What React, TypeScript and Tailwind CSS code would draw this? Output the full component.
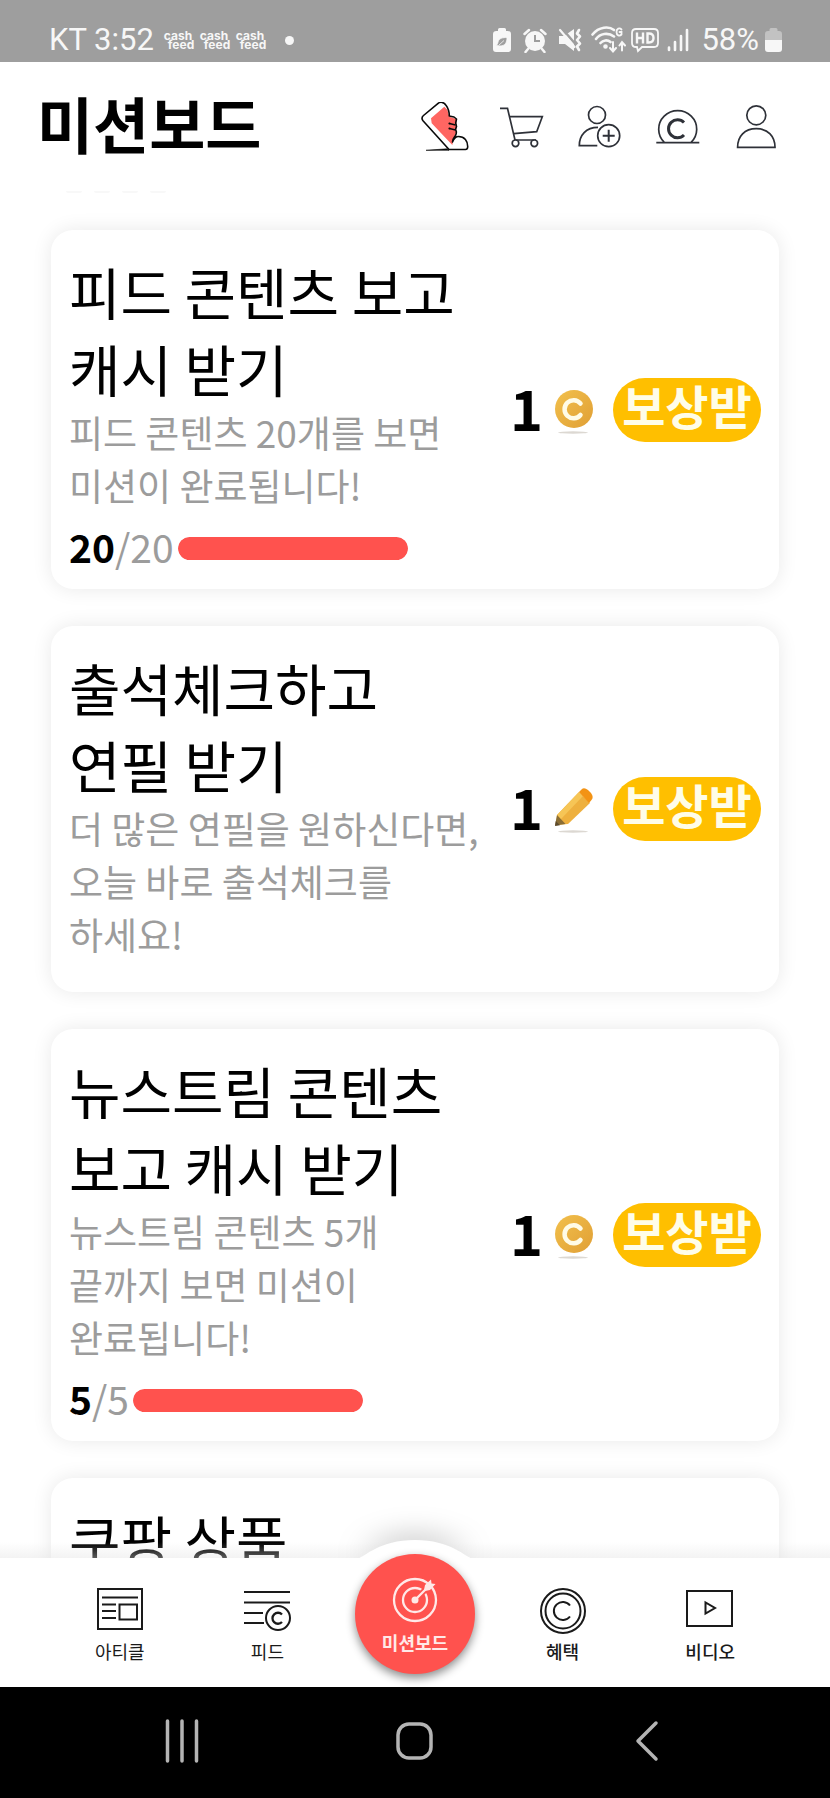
import type { ReactNode } from "react";

type Mission = {
  title: string;
  description: string;
  reward: "cash" | "pencil";
  done?: number;
  total?: number;
};

const missions: Mission[] = [
  {
    title: "피드 콘텐츠 보고\n캐시 받기",
    description: "피드 콘텐츠 20개를 보면\n미션이 완료됩니다!",
    reward: "cash",
    done: 20,
    total: 20,
  },
  {
    title: "출석체크하고\n연필 받기",
    description: "더 많은 연필을 원하신다면,\n오늘 바로 출석체크를\n하세요!",
    reward: "pencil",
  },
  {
    title: "뉴스트림 콘텐츠\n보고 캐시 받기",
    description: "뉴스트림 콘텐츠 5개\n끝까지 보면 미션이\n완료됩니다!",
    reward: "cash",
    done: 5,
    total: 5,
  },
];

function StatusBar() {
  return (
    <div className="flex h-[62px] shrink-0 items-center bg-[#9e9e9e] pl-[49px] pr-12 pt-[18px] font-['Roboto',sans-serif] text-[31px] leading-8 text-[#f7f7f7]">
      <span>KT 3:52</span>
      <div className="ml-[10px] flex gap-[5px]">
        {[0, 1, 2].map((i) => (
          <div key={i} className="w-[31px] font-['Inter',sans-serif] text-[12px] font-bold leading-[9px]">
            <div>cash</div>
            <div className="pl-1">feed</div>
          </div>
        ))}
      </div>
      <span className="ml-[18px] size-[9px] rounded-full bg-[#f7f7f7]" />

      <div className="ml-auto flex items-center">
        <svg width="18" height="26" viewBox="0 0 18 26" className="mr-3">
          <path d="M5 4V2.500Q5 1 6.500 1h5Q13 1 13 2.500V4h1.500Q18 4 18 7v15q0 3-3 3H3q-3 0-3-3V7q0-3 3.500-3z" fill="#f7f7f7" />
          <path d="M3 19c1-1.500 2-2.500 2-4 1-4 5-4.500 9-4.500 0 5-2 8.500-7 8.500-1 0-1.500-.5-2-.5zM6 18l5-4.500" fill="#9e9e9e" stroke="#f7f7f7" strokeWidth=".8" />
        </svg>
        <svg width="24" height="26" viewBox="0 0 24 26" className="mr-[11px]">
          <circle cx="12" cy="14" r="10" fill="#f7f7f7" />
          <path d="M1.500 7 6 3M22.500 7 18 3M5 22l-2.500 3M19 22l2.500 3" stroke="#f7f7f7" strokeWidth="2.500" strokeLinecap="round" />
          <path d="M12 8v6h5" fill="none" stroke="#9e9e9e" strokeWidth="2" />
        </svg>
        <svg width="24" height="26" viewBox="0 0 24 26" className="mr-[9px]">
          <path d="M1 9h5l10-7v22l-9-7H1z" fill="#f7f7f7" />
          <path d="M3.500 1 20 20" stroke="#9e9e9e" strokeWidth="2.500" />
          <path d="m2 3 14.500 17" stroke="#f7f7f7" strokeWidth="2.200" strokeLinecap="round" />
          <path d="m21 3-2 3.500 3 3-3 3.500 3 3.500-3 3 2 3.500" fill="none" stroke="#f7f7f7" strokeWidth="2.600" strokeLinecap="round" strokeLinejoin="round" />
        </svg>
        <svg width="35" height="28" viewBox="0 0 35 28" className="mr-[5px]" fill="none" stroke="#f7f7f7" strokeWidth="2.600" strokeLinecap="round">
          <path d="M1.500 8.500C8 .5 18 0 23 4M5 13c4-5.500 12-7 18-2.500M9.500 17c2.500-3 7-3.500 10-1" />
          <circle cx="14.500" cy="20.500" r="1" fill="#f7f7f7" />
          <path d="M30.500 3.500c-2-2-5-1-5 2.500s3 4.500 5 2.500V6h-2" strokeWidth="1.800" />
          <path d="M22 16v9m-3-3 3 3.500 3-3.500M31 24.500v-8m-2.500 3L31 16l3 3.500" strokeWidth="2" />
        </svg>
        <svg width="28" height="26" viewBox="0 0 28 26" className="mr-[8px]" fill="none" stroke="#f7f7f7" strokeWidth="1.800">
          <path d="M5 2h18q4 0 4 4v10q0 4-4 4H11l-4 4-1-4H5q-4 0-4-4V6q0-4 4-4z" />
          <path d="M6 5.500v11M12 5.500v11M6 11h6M16.500 6.500v9H18q4.500 0 4.500-4.500T18 6.500z" strokeWidth="2.400" />
        </svg>
        <svg width="22" height="26" viewBox="0 0 22 26" className="mr-[12px]" stroke="#f7f7f7" strokeWidth="2.600" strokeLinecap="round">
          <path d="M2 20.500V23M8 15v8M14 9v14M20 3v20" />
        </svg>
        <span className="mr-[6px]">58%</span>
        <svg width="17" height="26" viewBox="0 0 17 26">
          <path d="M4.500 4V2.500q0-1.500 1.500-1.500h5q1.500 0 1.500 1.500V4H14q3 0 3 3v6H0V7q0-3 3-3z" fill="#c2c2c2" />
          <path d="M0 13h17v9q0 3-3 3H3q-3 0-3-3z" fill="#f7f7f7" />
        </svg>
      </div>
    </div>
  );
}

function HeaderButton({ label, children }: { label: string; children: ReactNode }) {
  return (
    <button type="button" aria-label={label} className="size-[50px]">
      <svg viewBox="0 0 50 50" className="size-full" fill="none" stroke="#2e3138" strokeWidth="1.700">
        {children}
      </svg>
    </button>
  );
}

function Header() {
  return (
    <header className="flex h-[129px] shrink-0 items-center justify-between bg-white pl-[37px] pr-12">
      <h1 className="pb-[7px] text-[61px] font-bold leading-[88px]">미션보드</h1>
      <div className="flex gap-7">
        <HeaderButton label="만보기">
          <path d="M24.300 4.700 11 16.300l.7 5L32.300 43l1.200-5.500L34 35.700l2.300-6V17l-7-2.300-2-7z" fill="#ff6662" stroke="none" />
          <path
            d="M17.500 1.800 3.500 13.500Q.8 15.800 3 18.700L29 47.500h16.500q2 0 2.200-2.500c.2-6-3.200-10.500-9.200-10.500-2.500 0-4.500 2-6 5.500 0-3 1.500-4.500 3-6.500.8-1.500 1-2.500.8-4l-.8-2 1-3-.8-3.500.8-4-2.500-2-4.700-1c0-4-1.300-8-3.300-10.700-2.300-3.300-5.500-4-8.500-1.500z"
            stroke="#0a0a0a"
            strokeWidth="1.600"
            strokeLinejoin="round"
          />
          <path d="m29.500 21.500 6 1.500M29.500 26.500l6 1.500" stroke="#0a0a0a" strokeWidth="1.400" />
          <circle cx="29.500" cy="21.500" r="1.100" fill="#0a0a0a" stroke="none" />
          <circle cx="29.500" cy="26.500" r="1.100" fill="#0a0a0a" stroke="none" />
          <path d="m6 48.300 21-1.500 2 1.500z" fill="#0a0a0a" stroke="#0a0a0a" strokeWidth=".6" />
        </HeaderButton>
        <HeaderButton label="장바구니">
          <path d="M2 6.300h7.500L17 38h21" />
          <path d="M12 14.700h32.300l-5.600 15-23 2" />
          <circle cx="17.500" cy="41.300" r="3.300" fill="#fff" />
          <circle cx="36.300" cy="41.300" r="3.300" fill="#fff" />
        </HeaderButton>
        <HeaderButton label="친구 초대">
          <circle cx="21" cy="13" r="8.500" />
          <path d="M22 25.400C10 25.400 3.300 33 3.300 43.700h18" />
          <circle cx="32.700" cy="33.700" r="11" />
          <path d="M32.700 27.700v12M26.700 33.700h12" strokeWidth="2" />
        </HeaderButton>
        <HeaderButton label="캐시">
          <path d="M10.500 40.500a19 18.500 0 1 1 26.400 0M2.300 40.700h43" />
          <path d="M30 20.500a9 9 0 1 0 0 12.500" strokeWidth="3" />
        </HeaderButton>
        <HeaderButton label="내 정보">
          <circle cx="24.300" cy="13.300" r="9.500" />
          <path d="M5.600 45.300c0-11 7-18.600 18.700-18.600S43 34.300 43 45.300z" />
        </HeaderButton>
      </div>
    </header>
  );
}

function CashIcon() {
  return (
    <svg width="40" height="48" viewBox="0 0 40 48">
      <defs>
        <linearGradient id="coin" x1="0" y1="0" x2="1" y2="1">
          <stop offset="0" stopColor="#f2c04c" />
          <stop offset="1" stopColor="#e09f35" />
        </linearGradient>
      </defs>
      <circle cx="19" cy="23" r="19" fill="url(#coin)" />
      <path d="M25.500 17.500a9 9 0 1 0 0 11.500" fill="none" stroke="#fffbe6" strokeWidth="4.500" strokeLinecap="round" />
      <ellipse cx="18" cy="46.500" rx="15" ry="1.200" fill="#dcd8d2" />
    </svg>
  );
}

function PencilIcon() {
  return (
    <svg width="40" height="48" viewBox="0 0 40 48">
      <path d="M2 30 24 7l11 11-22 21-12 1z" fill="#eeb03e" />
      <path d="M2 30 24 7l4 4L6 34z" fill="#f6c556" />
      <path d="m24 7 2.500-2.500Q29 2 33 5l3 3q3 4 .5 7L34 18z" fill="#f39314" />
      <path d="M2 30 0 40.500 10.500 39z" fill="#8a6d35" />
      <path d="m.8 36-.8 5 5-.8z" fill="#5d4b2c" />
      <ellipse cx="18" cy="46.500" rx="15" ry="1.200" fill="#dcd8d2" />
    </svg>
  );
}

function MissionCard({ mission }: { mission: Mission }) {
  const hasProgress = mission.done !== undefined && mission.total !== undefined;

  return (
    <li
      className={`flex items-center justify-between rounded-[22px] bg-white px-[18px] pt-[22px] shadow-[0_0_20px_rgba(0,0,0,0.09)] ${
        hasProgress ? "pb-[14px]" : "pb-[31px]"
      }`}
    >
      <div>
        <h2 className="whitespace-pre-line text-[56px] leading-[77px]">{mission.title}</h2>
        <p className="whitespace-pre-line text-[37px] leading-[53px] text-[#9c9c9c]">{mission.description}</p>
        {hasProgress && (
          <div className="mt-[10px] flex items-center gap-1">
            <span className="pb-1 text-[39px] leading-[49px] text-[#9c9c9c]">
              <b className="text-black">{mission.done}</b>/{mission.total}
            </span>
            <div className="h-[23px] w-[230px] overflow-hidden rounded-full bg-gray-100">
              <div
                className="h-full rounded-full bg-[#ff524e]"
                style={{ width: `${(mission.done! / mission.total!) * 100}%` }}
              />
            </div>
          </div>
        )}
      </div>

      {/* Offsets the uneven card padding, so the reward stays in the middle */}
      <div className={`flex shrink-0 items-center ${hasProgress ? "-mt-2" : "mt-[9px]"}`}>
        <span className="mr-3 pb-[6px] text-[56px] font-bold leading-[64px]">1</span>
        {mission.reward === "cash" ? <CashIcon /> : <PencilIcon />}
        <button
          type="button"
          className="ml-[18px] h-16 w-[148px] rounded-full bg-[#ffbf00] pb-[10px] text-[47px] font-bold leading-[54px] text-[#fffde8]"
        >
          보상받
        </button>
      </div>
    </li>
  );
}

function NavItem({ label, strong, children }: { label: string; strong?: boolean; children: ReactNode }) {
  return (
    <a href="#" className="flex flex-1 flex-col items-center pt-7 text-[#1a1a1a]">
      <svg width="48" height="48" viewBox="0 0 48 48" fill="none" stroke="#1a1a1a" strokeWidth="2">
        {children}
      </svg>
      <span className={`mt-[5px] text-[18px] leading-6 ${strong ? "font-medium" : ""}`}>{label}</span>
    </a>
  );
}

function BottomNav() {
  return (
    <nav className="relative flex h-[129px] shrink-0 bg-white px-[46px]">
      <div className="absolute inset-x-0 bottom-full h-4 bg-linear-to-b from-transparent to-[rgba(225,225,225,0.4)]" />
      {/* Raised edge around the active tab */}
      <svg
        width="116"
        height="19"
        viewBox="0 0 116 19"
        className="absolute -top-[18px] left-1/2 -translate-x-1/2 overflow-visible drop-shadow-[0_-4px_14px_rgba(0,0,0,0.25)]"
      >
        <path d="M0 19C8 17 22 0 58 0s50 17 58 19z" fill="#fff" />
      </svg>
      <div className="absolute inset-0 bg-white" />

      <div className="relative flex flex-1">
        <NavItem label="아티클">
          <path d="M2 3h44v40H2zM6 11.500h36M6 18.500h14M6 25h14M6 32h14M23.500 18.500h17.500v15H23.500z" />
        </NavItem>
        <NavItem label="피드">
          <path d="M1 6h46M1 16.500h46M1 27h19M1 37h20" />
          <circle cx="35" cy="32" r="12" />
          <path d="M39 28.500a5.500 5.500 0 1 0 0 7.500" strokeWidth="2.300" />
        </NavItem>

        <div className="flex flex-1 justify-center">
          <a
            href="#"
            aria-current="page"
            className="-mt-1 flex size-[120px] shrink-0 flex-col items-center rounded-full bg-[#ff524e] pt-[21px] text-[#ffe9e8] shadow-[0_4px_10px_rgba(0,0,0,0.45)]"
          >
            <svg width="50" height="50" viewBox="0 0 50 50" fill="none" stroke="currentColor" strokeWidth="2.300">
              <circle cx="25" cy="25" r="21" />
              <circle cx="25" cy="25" r="12" />
              <path d="m27 23 17-17" stroke="#ff524e" strokeWidth="6" />
              <path d="m25 25 13-13" />
              <circle cx="25" cy="25" r="3.500" fill="currentColor" stroke="none" />
              <path d="m34 15 1-5 6-5.500.5 4 4 .5-5.500 6-5 1z" fill="currentColor" stroke="none" />
            </svg>
            <span className="mt-[5px] text-[18px] font-bold leading-6">미션보드</span>
          </a>
        </div>

        <NavItem label="혜택" strong>
          <circle cx="24" cy="25" r="22" />
          <circle cx="24" cy="25" r="17.500" />
          <path d="M31 19.500a9 9 0 1 0 0 11" />
        </NavItem>
        <NavItem label="비디오" strong>
          <path d="M1 5h45v35H1z" />
          <path d="M19.500 16.500v11l9.500-5.500z" />
        </NavItem>
      </div>
    </nav>
  );
}

function SystemNav() {
  return (
    <div className="flex h-[111px] shrink-0 items-start bg-black px-[65px] pt-[31px]">
      <button type="button" aria-label="최근 앱" className="flex flex-1 justify-center">
        <svg width="46" height="46" viewBox="0 0 46 46" stroke="#b4b4b4" strokeWidth="3.500" strokeLinecap="round">
          <path d="M8.500 3v40M23 3v40M37.500 3v40" />
        </svg>
      </button>
      <button type="button" aria-label="홈" className="flex flex-1 justify-center">
        <svg width="46" height="46" viewBox="0 0 46 46" fill="none" stroke="#b4b4b4" strokeWidth="3.500">
          <rect x="6" y="6" width="33" height="34" rx="11" />
        </svg>
      </button>
      <button type="button" aria-label="뒤로" className="flex flex-1 justify-center">
        <svg width="46" height="46" viewBox="0 0 46 46" fill="none" stroke="#b4b4b4" strokeWidth="3.500" strokeLinecap="round" strokeLinejoin="round">
          <path d="M31 5 13 23l18 18" />
        </svg>
      </button>
    </div>
  );
}

export default function App() {
  return (
    <div className="flex h-screen flex-col overflow-hidden bg-white font-['Noto_Sans_CJK_KR',sans-serif] text-black">
      <StatusBar />
      <Header />

      <main className="min-h-0 flex-1 overflow-hidden">
        {/* Lower edge of the heading that has scrolled away */}
        <div className="flex h-[39px] gap-3 pl-[66px]">
          {[0, 1, 2, 3].map((i) => (
            <span key={i} className="h-[2px] w-4 rounded-b-full bg-[#f8f8f8]" />
          ))}
        </div>
        <ul className="flex flex-col gap-[37px] px-[51px]">
          {missions.map((mission) => (
            <MissionCard key={mission.title} mission={mission} />
          ))}
          <li className="rounded-[22px] bg-white px-[18px] pb-10 pt-[22px] shadow-[0_0_20px_rgba(0,0,0,0.09)]">
            <h2 className="text-[56px] leading-[77px]">쿠팡 상품</h2>
          </li>
        </ul>
      </main>

      <BottomNav />
      <SystemNav />
    </div>
  );
}
